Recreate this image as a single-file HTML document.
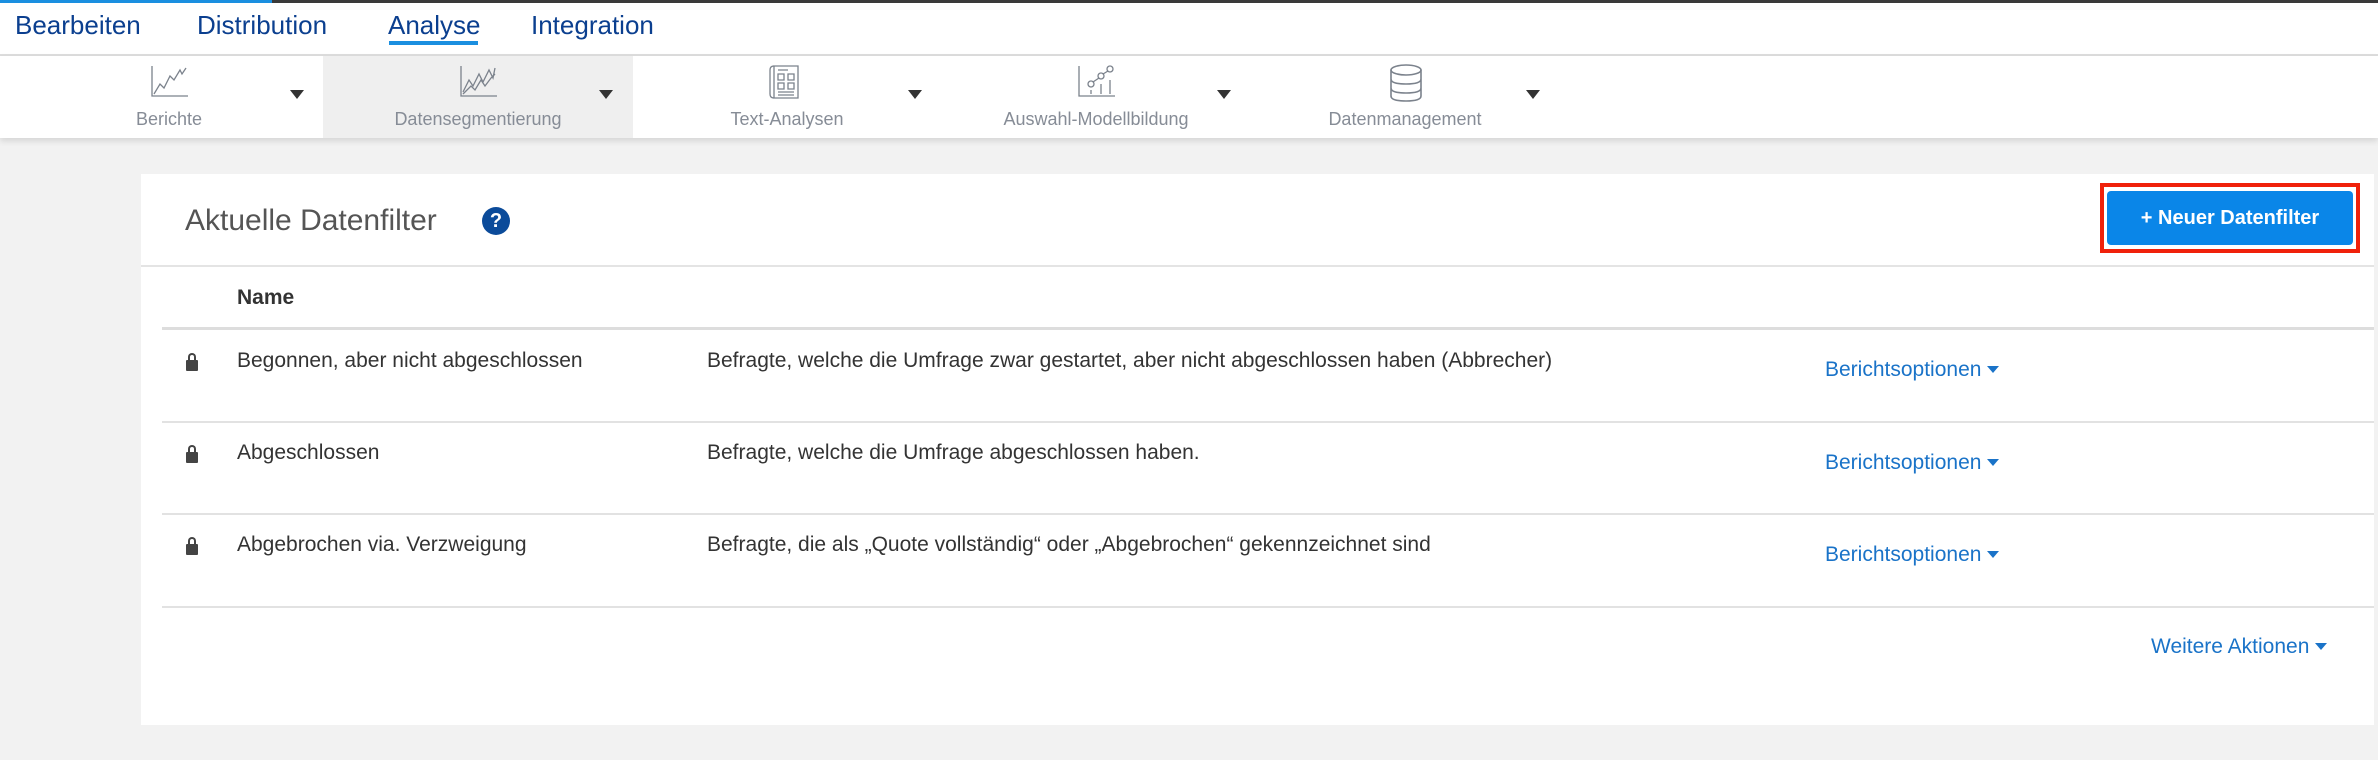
<!DOCTYPE html>
<html><head><meta charset="utf-8"><style>
*{margin:0;padding:0;box-sizing:border-box}
body{width:2378px;height:760px;background:#f2f2f2;font-family:"Liberation Sans",sans-serif;position:relative;overflow:hidden}
.abs{position:absolute}
.top{left:0;top:0;width:2378px;height:56px;background:#fff;border-top:3px solid #3a3a3a;border-bottom:2px solid #ddd}
.top .bl{position:absolute;left:0;top:-3px;width:272px;height:3px;background:#1a8fe0}
.tab{position:absolute;top:7px;font-size:26px;color:#0b3f8f}
.tb{left:0;top:56px;width:2378px;height:82px;background:#fff;box-shadow:0 3px 6px rgba(0,0,0,.12)}
.item{position:absolute;top:0;width:310px;height:82px}
.item svg{position:absolute;left:136px;top:8px}
.item .lb{position:absolute;left:0;width:310px;text-align:center;top:53px;font-size:18px;color:#868c96}
.item .ar{position:absolute;left:276px;top:34px;width:0;height:0;border-left:7px solid transparent;border-right:7px solid transparent;border-top:9px solid #333}
.card{left:141px;top:174px;width:2233px;height:551px;background:#fff}
.t{position:absolute;font-size:21px;color:#333}
.bo{position:absolute;font-size:21px;color:#1a73c8}
.bo:after{content:"";display:inline-block;margin-left:6px;vertical-align:3px;border-left:6px solid transparent;border-right:6px solid transparent;border-top:7px solid #1a73c8}
.line{position:absolute;left:21px;width:2212px;height:2px;background:#e2e2e2}
.lock{position:absolute;left:45px;width:12px;height:11px;background:#444;border-radius:1px}
.lock:before{content:"";position:absolute;left:2px;top:-7px;width:8px;height:9px;border:2px solid #444;border-bottom:none;border-radius:4px 4px 0 0;box-sizing:border-box}
</style></head><body>
<div class="abs top"><div class="bl"></div>
<span class="tab" style="left:15px">Bearbeiten</span>
<span class="tab" style="left:197px">Distribution</span>
<span class="tab" style="left:388px">Analyse</span>
<div class="abs" style="left:389px;top:38px;width:89px;height:4px;background:#1a8fe0"></div>
<span class="tab" style="left:531px">Integration</span>
</div>
<div class="abs tb">
<div class="item" style="left:14px"><svg width="40" height="36" viewBox="0 0 40 36" fill="none" stroke="#7b828c" stroke-width="1.3"><path d="M2 2V32H38"/><path d="M4 30L10 20L14 24L20 12L24 16L30 6L32 10L36 4"/></svg><div class="lb">Berichte</div><div class="ar"></div></div>
<div class="item" style="left:323px;background:#efefef"><svg width="40" height="36" viewBox="0 0 40 36" fill="none" stroke="#7b828c" stroke-width="1.3"><path d="M2 2V32H38"/><path d="M4 28L10 16L14 22L20 10L24 18L30 6L34 14L36 4"/><path d="M4 30L12 22L16 26L22 16L26 22L32 14L36 10"/></svg><div class="lb">Datensegmentierung</div><div class="ar"></div></div>
<div class="item" style="left:632px"><svg width="40" height="36" viewBox="0 0 40 36" fill="none" stroke="#7b828c" stroke-width="1.3"><path d="M6 2H30V34H6Z"/><path d="M6 2Q2 2 2 6V30Q2 34 6 34"/><path d="M10 6H20M10 10H16V16H10ZM20 10H26V16H20ZM10 19H16V25H10ZM20 19H26V25H20ZM10 28H26M10 31H26"/></svg><div class="lb">Text-Analysen</div><div class="ar"></div></div>
<div class="item" style="left:941px"><svg width="40" height="36" viewBox="0 0 40 36" fill="none" stroke="#7b828c" stroke-width="1.3"><path d="M2 2V32H38"/><circle cx="14" cy="20" r="3"/><circle cx="24" cy="12" r="3"/><circle cx="33" cy="5" r="3"/><path d="M16 18L22 14M26 10L31 7M14 26V30M24 20V30M33 16V30"/></svg><div class="lb">Auswahl-Modellbildung</div><div class="ar"></div></div>
<div class="item" style="left:1250px"><svg width="40" height="38" viewBox="0 0 40 38" fill="none" stroke="#7b828c" stroke-width="1.6"><ellipse cx="20" cy="6" rx="15" ry="5"/><path d="M5 6V32Q5 37 20 37Q35 37 35 32V6M5 15Q5 20 20 20Q35 20 35 15M5 24Q5 29 20 29Q35 29 35 24"/></svg><div class="lb">Datenmanagement</div><div class="ar"></div></div>
</div>
<div class="abs card">
<div class="abs" style="left:44px;top:30px;font-size:30px;color:#555;font-weight:300">Aktuelle Datenfilter</div>
<div class="abs" style="left:341px;top:33px;width:28px;height:28px;border-radius:50%;background:#0b4b9a;color:#fff;font-weight:bold;font-size:20px;text-align:center;line-height:28px">?</div>
<div class="abs" style="left:1959px;top:9px;width:260px;height:70px;border:4px solid #f0210a;padding:4px 3px"><div style="width:100%;height:100%;background:#0a86e8;border-radius:4px;color:#fff;font-weight:bold;font-size:20px;text-align:center;line-height:54px">+ Neuer Datenfilter</div></div>
<div class="abs" style="left:0;top:91px;width:2233px;height:2px;background:#e4e4e4"></div>
<div class="t" style="left:96px;top:112px;font-weight:bold">Name</div>
<div class="line" style="top:153px;height:3px;background:#ddd"></div>
<div class="lock" style="top:186px"></div><div class="t" style="left:96px;top:175px">Begonnen, aber nicht abgeschlossen</div>
<div class="t" style="left:566px;top:175px">Befragte, welche die Umfrage zwar gestartet, aber nicht abgeschlossen haben (Abbrecher)</div>
<div class="bo" style="left:1684px;top:184px">Berichtsoptionen</div>
<div class="line" style="top:247px"></div>
<div class="lock" style="top:278px"></div><div class="t" style="left:96px;top:267px">Abgeschlossen</div>
<div class="t" style="left:566px;top:267px">Befragte, welche die Umfrage abgeschlossen haben.</div>
<div class="bo" style="left:1684px;top:277px">Berichtsoptionen</div>
<div class="line" style="top:339px"></div>
<div class="lock" style="top:370px"></div><div class="t" style="left:96px;top:359px">Abgebrochen via. Verzweigung</div>
<div class="t" style="left:566px;top:359px">Befragte, die als „Quote vollständig“ oder „Abgebrochen“ gekennzeichnet sind</div>
<div class="bo" style="left:1684px;top:369px">Berichtsoptionen</div>
<div class="line" style="top:432px"></div>
<div class="bo" style="left:2010px;top:461px">Weitere Aktionen</div>
</div>
</body></html>
